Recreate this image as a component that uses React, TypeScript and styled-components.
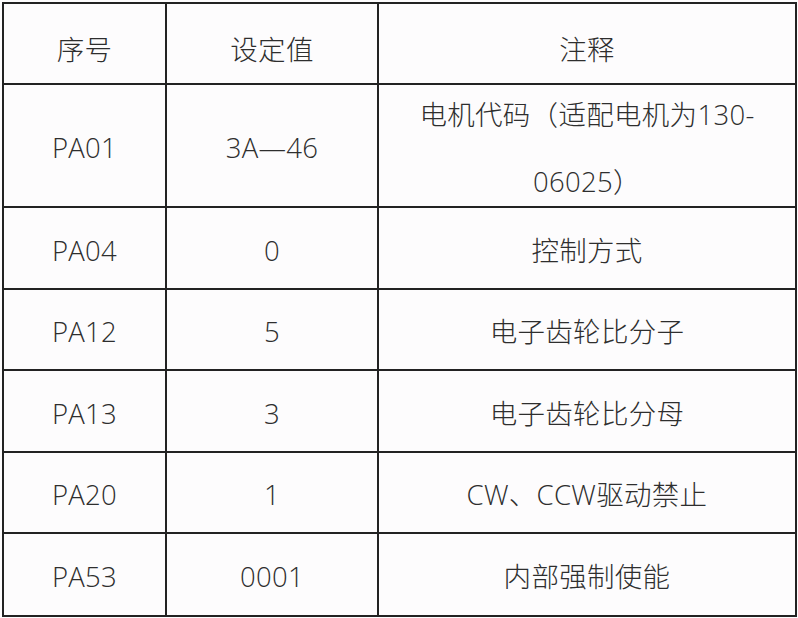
import React from 'react';
import styled, { createGlobalStyle } from 'styled-components';

const GlobalStyle = createGlobalStyle`
    html, body {
        margin: 0;
        padding: 0;
        background: #fdfcfd;
    }
    body {
        font-family: "Open Sans", "Noto Sans CJK SC", sans-serif;
        color: #2e2e2e;
    }
`;

const Page = styled.div`
    padding: 2px 0 0 2px;
`;

const Table = styled.div`
    display: grid;
    grid-template-columns: 163px 212px 418px;
    width: max-content;
    border-top: 2px solid #222;
    border-left: 2px solid #222;
`;

const Cell = styled.div<{ $height: number; $header?: boolean }>`
    height: ${(p) => p.$height}px;
    box-sizing: border-box;
    border-right: 2px solid #222;
    border-bottom: 2px solid #222;
    display: flex;
    align-items: center;
    justify-content: center;
    text-align: center;
    padding-top: ${(p) => (p.$header ? 8 : 4)}px;
    font-size: 27.5px;
    font-weight: 300;
    letter-spacing: 0.3px;
`;

const Note = styled.span`
    line-height: 67px;
`;

const rows: { id: string; value: string; note: string[]; height: number }[] = [
    { id: 'PA01', value: '3A—46', note: ['电机代码（适配电机为130-', '06025）'], height: 123 },
    { id: 'PA04', value: '0', note: ['控制方式'], height: 82 },
    { id: 'PA12', value: '5', note: ['电子齿轮比分子'], height: 81 },
    { id: 'PA13', value: '3', note: ['电子齿轮比分母'], height: 82 },
    { id: 'PA20', value: '1', note: ['CW、CCW驱动禁止'], height: 81 },
    { id: 'PA53', value: '0001', note: ['内部强制使能'], height: 83 },
];

const App = () => (
    <Page>
        <GlobalStyle />
        <Table>
            <Cell $height={81} $header>序号</Cell>
            <Cell $height={81} $header>设定值</Cell>
            <Cell $height={81} $header>注释</Cell>
            {rows.map((r) => (
                <React.Fragment key={r.id}>
                    <Cell $height={r.height}>{r.id}</Cell>
                    <Cell $height={r.height}>{r.value}</Cell>
                    <Cell $height={r.height}>
                        <Note>
                            {r.note.map((line, i) => (
                                <React.Fragment key={i}>
                                    {i > 0 && <br />}
                                    {line}
                                </React.Fragment>
                            ))}
                        </Note>
                    </Cell>
                </React.Fragment>
            ))}
        </Table>
    </Page>
);

export default App;
